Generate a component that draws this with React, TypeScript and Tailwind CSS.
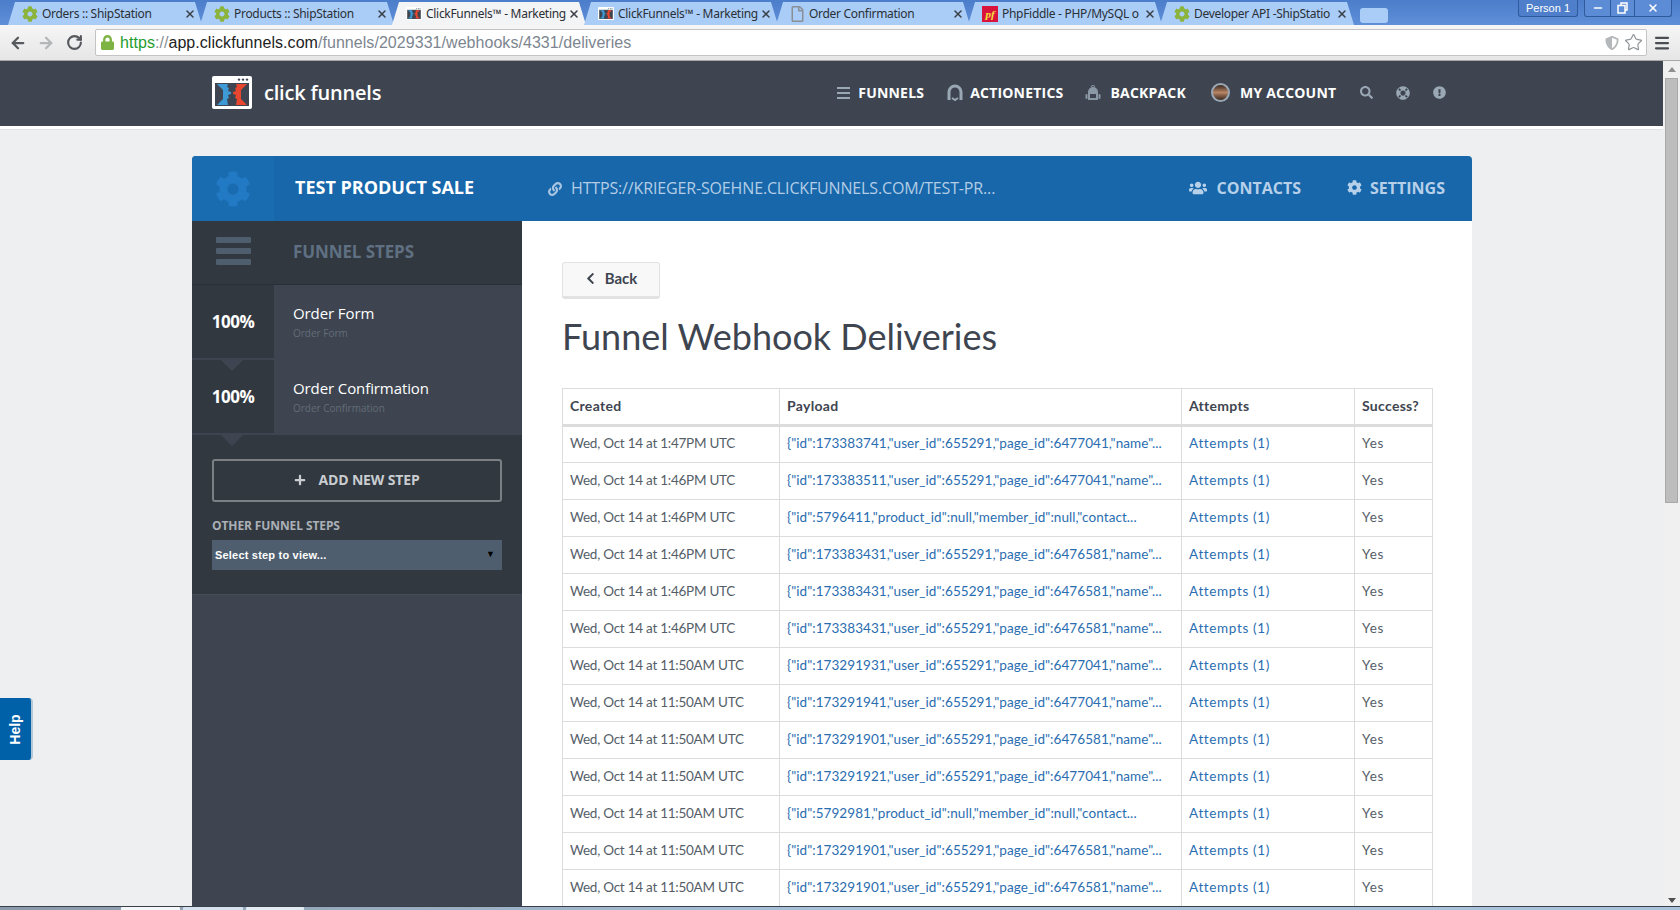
import React from 'react';
import { ArrowLeft, ArrowRight, RotateCw, Star, Menu, Minus, X } from 'lucide-react';
import { FaCog, FaUsers, FaLink, FaChevronLeft, FaSearch, FaPlus, FaLifeRing, FaExclamationCircle, FaShieldAlt, FaLock, FaRegFile } from 'react-icons/fa';

const TABS = [
  { title: 'Orders :: ShipStation', icon: 'gear' },
  { title: 'Products :: ShipStation', icon: 'gear' },
  { title: 'ClickFunnels™ - Marketing', icon: 'cf', active: true },
  { title: 'ClickFunnels™ - Marketing', icon: 'cf' },
  { title: 'Order Confirmation', icon: 'file' },
  { title: 'PhpFiddle - PHP/MySQL o', icon: 'pf' },
  { title: 'Developer API -ShipStatio', icon: 'gear' },
];

const id = (a: string, b: string) => `{"id":${a},"user_id":655291,"page_id":${b},"name"...`;
const contact = (a: string) => `{"id":${a},"product_id":null,"member_id":null,"contact...`;

const ROWS = [
  ['Wed, Oct 14 at 1:47PM UTC', id('173383741', '6477041')],
  ['Wed, Oct 14 at 1:46PM UTC', id('173383511', '6477041')],
  ['Wed, Oct 14 at 1:46PM UTC', contact('5796411')],
  ['Wed, Oct 14 at 1:46PM UTC', id('173383431', '6476581')],
  ['Wed, Oct 14 at 1:46PM UTC', id('173383431', '6476581')],
  ['Wed, Oct 14 at 1:46PM UTC', id('173383431', '6476581')],
  ['Wed, Oct 14 at 11:50AM UTC', id('173291931', '6477041')],
  ['Wed, Oct 14 at 11:50AM UTC', id('173291941', '6477041')],
  ['Wed, Oct 14 at 11:50AM UTC', id('173291901', '6476581')],
  ['Wed, Oct 14 at 11:50AM UTC', id('173291921', '6477041')],
  ['Wed, Oct 14 at 11:50AM UTC', contact('5792981')],
  ['Wed, Oct 14 at 11:50AM UTC', id('173291901', '6476581')],
  ['Wed, Oct 14 at 11:50AM UTC', id('173291901', '6476581')],
];

const CfLogo = ({ size = 40 }: { size?: number }) => (
  <svg width={size} height={size * 0.825} viewBox="0 0 40 33">
    <rect width="40" height="33" rx="2" fill="#fff" />
    <rect x="3" y="7" width="34" height="23" fill="#3e4550" />
    <circle cx="27" cy="3.6" r="1.2" fill="#3e4550" />
    <circle cx="31" cy="3.6" r="1.2" fill="#3e4550" />
    <circle cx="35" cy="3.6" r="1.2" fill="#3e4550" />
    <path d="M5 8h11l-1 3 2 1-1 3 3 1v2l-3 1 1 3-2 1 1 6H5l6-6v-9z" fill="#3d9ad6" />
    <path d="M35 8H24l1 3-2 1 1 3-3 1v2l3 1-1 3 2 1-1 6h11l-6-6v-9z" fill="#e8462e" />
  </svg>
);

const TabIcon = ({ kind }: { kind: string }) => {
  if (kind === 'gear') return <FaCog className="w-4 h-4 shrink-0 text-[#8cb33c]" />;
  if (kind === 'cf') return <CfLogo size={16} />;
  if (kind === 'file') return <FaRegFile className="w-[13px] h-4 mx-px shrink-0 text-[#8a8f96]" />;
  return (
    <span className="w-4 h-4 shrink-0 bg-[#d8143c] text-[#f6e23a] text-[11px] font-bold italic leading-4 text-center [font-family:'Liberation_Serif',serif]">
      pf
    </span>
  );
};

const Tab = ({ title, icon, active }: { title: string; icon: string; active?: boolean }) => (
  <div
    className={`relative -mr-[2px] flex h-[23px] w-[194px] shrink-0 items-center gap-[4px] pl-[14px] pr-[6px] [clip-path:polygon(0_100%,7px_0,calc(100%-7px)_0,100%_100%)] ${
      active ? 'bg-[#f3f4f5]' : 'bg-[#a9cdf6]'
    }`}
  >
    <TabIcon kind={icon} />
    <span className="min-w-0 flex-1 whitespace-nowrap text-[12px] tracking-[-0.3px] text-[#2b2f36] [font-family:'Noto_Sans',sans-serif]">
      {title}
    </span>
    <X className="h-3 w-3 shrink-0 text-[#3a3f47]" strokeWidth={3} />
  </div>
);

const TabStrip = () => (
  <div className="flex h-[25px] items-end bg-gradient-to-b from-[#4c7dca] to-[#5f8fd8] pl-2">
    {TABS.map((t) => (
      <Tab key={t.title + t.icon + (t.active ? 'a' : '')} title={t.title} icon={t.icon} active={t.active} />
    ))}
    <div className="ml-[8px] mb-[2px] h-[15px] w-[28px] rounded-[3px] bg-[#a9cdf6]" />
    <div className="ml-auto mb-auto flex items-start gap-[6px] pr-2">
      <div className="flex h-[17px] w-[60px] items-center justify-center rounded-b-[3px] border border-t-0 border-[#2f5a9c] bg-[#4f7fca] text-[11px] text-white [font-family:'Liberation_Sans',sans-serif]">
        Person 1
      </div>
      <div className="flex h-[17px] w-[88px] rounded-b-[3px] border border-t-0 border-[#2f5a9c] bg-[#5d8cd6] text-white">
        <div className="flex w-[26px] items-center justify-center border-r border-[#2f5a9c]">
          <Minus className="h-3 w-3" strokeWidth={3} />
        </div>
        <div className="flex w-[24px] items-center justify-center border-r border-[#2f5a9c]">
          <svg width="11" height="12" viewBox="0 0 11 12" fill="none" stroke="#fff" strokeWidth="1.5">
            <path d="M4 3V1h6v7H8" />
            <rect x="1" y="3.5" width="7" height="7.5" />
          </svg>
        </div>
        <div className="flex flex-1 items-center justify-center">
          <X className="h-3 w-3" strokeWidth={3} />
        </div>
      </div>
    </div>
  </div>
);

const Toolbar = () => (
  <div className="flex h-[36px] items-center bg-gradient-to-b from-[#f6f6f6] to-[#e6e6e6] border-b border-[#a8a8a8]">
    <ArrowLeft className="ml-[9px] h-[18px] w-[18px] text-[#55585c]" strokeWidth={3} />
    <ArrowRight className="ml-[10px] h-[18px] w-[18px] text-[#b4b6b8]" strokeWidth={3} />
    <RotateCw className="ml-[11px] h-[17px] w-[17px] text-[#55585c]" strokeWidth={3} />
    <div className="ml-[12px] flex h-[27px] w-[1552px] items-center rounded-[2px] border border-[#c4c4c4] bg-white pl-[5px] pr-[3px]">
      <FaLock className="h-[15px] w-[13px] text-[#7cb342]" />
      <div className="ml-[6px] flex-1 text-[16px] tracking-[0.05px] [font-family:'Liberation_Sans',sans-serif]">
        <span className="text-[#1f9d2e]">https</span>
        <span className="text-[#8a8f94]">://</span>
        <span className="text-[#222]">app.clickfunnels.com</span>
        <span className="text-[#7d8690]">/funnels/2029331/webhooks/4331/deliveries</span>
      </div>
      <FaShieldAlt className="h-[16px] w-[14px] text-[#b4b8ba]" />
      <Star className="ml-[5px] h-[19px] w-[19px] text-[#8f9498]" strokeWidth={1.5} />
    </div>
    <Menu className="ml-[6px] h-[18px] w-[18px] text-[#4a4d52]" strokeWidth={3} />
  </div>
);

const ActioneticsIcon = () => (
  <svg width="16" height="17" viewBox="0 0 16 17" fill="none" stroke="#9aa8b6" strokeWidth="3">
    <path d="M2 16V8a6 6 0 0 1 12 0v8" />
    <path d="M5 14l3 2 3-2" strokeWidth="2" />
  </svg>
);

const BackpackIcon = () => (
  <svg width="16" height="17" viewBox="0 0 16 17" fill="#8a97a4">
    <path d="M6 3a2 2 0 0 1 4 0h-1a1 1 0 0 0-2 0z" />
    <path d="M3 8a5 5 0 0 1 10 0v8H3zM5 10v4h6v-4z" />
    <rect x="0.5" y="10" width="2" height="5" rx="1" />
    <rect x="13.5" y="10" width="2" height="5" rx="1" />
  </svg>
);

const NavItem = ({ icon, label, gap }: { icon: React.ReactNode; label: string; gap: string }) => (
  <div className={`flex items-center ${gap}`}>
    {icon}
    <span className="text-[14px] font-bold text-white [font-family:'Open_Sans',sans-serif] tracking-[0.2px]">{label}</span>
  </div>
);

const AppHeader = () => (
  <div className="h-[65px] bg-[#3e4550] pl-[212px] pb-[2px] flex items-center">
    <CfLogo />
    <span className="ml-3 text-[20px] font-semibold text-white [font-family:'Open_Sans',sans-serif] tracking-[-0.2px]">click funnels</span>
    <div className="ml-[456px] flex items-center">
      <NavItem
        gap="gap-[8px]"
        label="FUNNELS"
        icon={
          <div className="flex w-[13px] flex-col gap-[3px]">
            <div className="h-[2px] bg-[#9aa8b6]" />
            <div className="h-[2px] bg-[#9aa8b6]" />
            <div className="h-[2px] bg-[#9aa8b6]" />
          </div>
        }
      />
      <div className="ml-[23px]">
        <NavItem gap="gap-[7px]" label="ACTIONETICS" icon={<ActioneticsIcon />} />
      </div>
      <div className="ml-[22px]">
        <NavItem gap="gap-[9px]" label="BACKPACK" icon={<BackpackIcon />} />
      </div>
      <div className="ml-[25px]">
        <NavItem
          gap="gap-[10px]"
          label="MY ACCOUNT"
          icon={<div className="h-[19px] w-[19px] rounded-full border-2 border-[#9aa8b6] bg-gradient-to-b from-[#3a2a20] via-[#b98565] to-[#3a2a20]" />}
        />
      </div>
      <FaSearch className="ml-[24px] h-[13px] w-[13px] text-[#9aa8b6]" />
      <FaLifeRing className="ml-[23px] h-[14px] w-[14px] text-[#9aa8b6]" />
      <FaExclamationCircle className="ml-[23px] h-[13px] w-[13px] text-[#9aa8b6]" />
    </div>
  </div>
);

const CardHeader = () => (
  <div className="flex h-[65px] items-center rounded-t-[4px] bg-[#1767aa] [font-family:'Open_Sans',sans-serif]">
    <div className="flex h-full w-[82px] shrink-0 items-center justify-center rounded-tl-[4px] bg-[#1a6cb1]">
      <FaCog className="h-[36px] w-[36px] text-[#2279c4]" />
    </div>
    <div className="ml-[21px] w-[253px] shrink-0 pb-[2px] text-[18px] font-bold text-white">TEST PRODUCT SALE</div>
    <FaLink className="h-[14px] w-[14px] text-[#a8c5e2]" />
    <div className="ml-[9px] pb-[2px] text-[16px] text-[#b4cde6] tracking-[-0.15px]">HTTPS://KRIEGER-SOEHNE.CLICKFUNNELS.COM/TEST-PR...</div>
    <div className="ml-auto flex items-center pr-[27px] pb-[2px] text-[16px] font-bold text-[#b7d0e9]">
      <FaUsers className="h-[18px] w-[18px]" />
      <span className="ml-[9px]">CONTACTS</span>
      <FaCog className="ml-[46px] h-[15px] w-[15px]" />
      <span className="ml-[8px]">SETTINGS</span>
    </div>
  </div>
);

const Chevron = () => (
  <div className="absolute left-[27px] top-full z-10 h-0 w-0 border-x-[13px] border-t-[13px] border-x-transparent border-t-[#3e4550]" />
);

const StepRow = ({ name }: { name: string }) => (
  <div className="flex h-[75px] bg-[#3e4550]">
    <div className="relative mb-[2px] flex w-[82px] shrink-0 items-center justify-center bg-[#32383f]">
      <span className="text-[17px] font-bold text-white tracking-[-0.5px]">100%</span>
      <Chevron />
    </div>
    <div className="ml-[19px] pt-[16px]">
      <div className="text-[15px] leading-[24px] text-white tracking-[-0.1px]">{name}</div>
      <div className="mt-[1px] text-[10px] leading-[14px] text-[#636c77]">{name}</div>
    </div>
  </div>
);

const Sidebar = () => (
  <div className="w-[330px] shrink-0 bg-[#3e4550] [font-family:'Open_Sans',sans-serif]">
    <div className="flex h-[64px] items-center border-b border-[#2b3036] bg-[#32383f]">
      <div className="flex h-full w-[82px] shrink-0 flex-col items-center justify-center gap-[5px] pb-[4px]">
        <div className="h-[6px] w-[35px] rounded-[1px] bg-[#4f5e6e]" />
        <div className="h-[6px] w-[35px] rounded-[1px] bg-[#4f5e6e]" />
        <div className="h-[6px] w-[35px] rounded-[1px] bg-[#4f5e6e]" />
      </div>
      <div className="ml-[19px] pb-[2px] text-[17px] font-bold text-[#5f7083] tracking-[-0.1px]">FUNNEL STEPS</div>
    </div>
    <StepRow name="Order Form" />
    <StepRow name="Order Confirmation" />
    <div className="h-[160px] border-b border-[#454d58] bg-[#32383f] px-5 pt-[24px]">
      <div className="flex h-[43px] items-center justify-center gap-3 rounded-[3px] border-2 border-[#7c8085] pb-[2px] text-[14px] font-bold text-[#c9cdd1] tracking-[-0.15px]">
        <FaPlus className="h-[12px] w-[12px]" />
        ADD NEW STEP
      </div>
      <div className="mt-[16px] text-[12px] leading-[16px] font-bold text-[#aab0b7] tracking-[-0.1px]">OTHER FUNNEL STEPS</div>
      <div className="mt-[6px] flex h-[30px] items-center justify-between bg-[#4f5e6e] pl-[3px] pr-[7px] text-[11px] font-bold text-white tracking-[0.2px] [font-family:'Liberation_Sans',sans-serif]">
        Select step to view...
        <span className="text-[9px] text-black">▼</span>
      </div>
    </div>
  </div>
);

const DeliveriesTable = () => (
  <table className="w-[870px] table-fixed border-collapse text-[13.5px] text-[#555e68]">
    <colgroup>
      <col className="w-[217px]" />
      <col className="w-[402px]" />
      <col className="w-[173px]" />
      <col className="w-[78px]" />
    </colgroup>
    <thead>
      <tr className="h-[37px] border-b-[3px] border-[#dcdcdc]">
        {['Created', 'Payload', 'Attempts', 'Success?'].map((h) => (
          <th key={h} className="border border-b-[3px] border-[#dcdcdc] pl-[7px] pr-1 pb-[2px] text-left text-[14px] font-bold text-[#3e4550] tracking-[0.3px]">
            {h}
          </th>
        ))}
      </tr>
    </thead>
    <tbody>
      {ROWS.map(([created, payload], i) => (
        <tr key={i} className="h-[37px]">
          <td className="border border-[#dcdcdc] pl-[7px] pr-1 pb-[2px] whitespace-nowrap tracking-[-0.25px]">{created}</td>
          <td className="border border-[#dcdcdc] pl-[7px] pr-1 pb-[2px] whitespace-nowrap text-[#2a6db0] tracking-[0.07px]">{payload}</td>
          <td className="border border-[#dcdcdc] pl-[7px] pr-1 pb-[2px] text-[#2a6db0] tracking-[0.65px]">Attempts (1)</td>
          <td className="border border-[#dcdcdc] pl-[7px] pr-1 pb-[2px] tracking-[0.7px]">Yes</td>
        </tr>
      ))}
    </tbody>
  </table>
);

const Main = () => (
  <div className="flex-1 bg-white pl-10 pt-[41px] [font-family:Lato,sans-serif]">
    <button className="flex h-[37px] w-[98px] items-center justify-center gap-[9px] rounded-[3px] border border-b-[3px] border-[#e2e2e2] bg-[#f8f8f8] pb-[2px] text-[15px] font-bold text-[#3e4550]">
      <FaChevronLeft className="h-[13px] w-[11px]" />
      Back
    </button>
    <h1 className="mt-[14px] text-[36px] leading-[46px] font-normal text-[#3e4550]">Funnel Webhook Deliveries</h1>
    <div className="mt-[29px]">
      <DeliveriesTable />
    </div>
  </div>
);

const Scrollbar = () => (
  <div className="flex w-[17px] shrink-0 flex-col items-center bg-[#f0f0f0]">
    <div className="mt-[6px] h-0 w-0 border-x-[4px] border-b-[5px] border-x-transparent border-b-[#8f8f8f]" />
    <div className="mt-[6px] h-[425px] w-[13px] border border-[#a8a8a8] bg-[#bdbdbd]" />
    <div className="mt-auto mb-[3px] h-0 w-0 border-x-[4px] border-t-[5px] border-x-transparent border-t-[#505050]" />
  </div>
);

const Taskbar = () => (
  <div className="flex h-[4px] border-t border-[#3a4048] bg-gradient-to-r from-[#8b9aaa] via-[#a9c3dc] to-[#a9c3dc] pl-[121px]">
    <div className="h-full w-[59px] rounded-t-[1px] bg-[#f4f7fa]" />
    <div className="ml-[3px] h-full w-[60px] rounded-t-[1px] bg-[#d5e1ee]" />
    <div className="ml-[3px] h-full w-[58px] rounded-t-[1px] bg-[#e2eaf3]" />
  </div>
);

export default function App() {
  return (
    <div className="flex h-screen flex-col overflow-hidden bg-[#eeeff1]">
      <TabStrip />
      <Toolbar />
      <div className="relative flex min-h-0 flex-1">
        <div className="min-w-0 flex-1 overflow-hidden">
          <AppHeader />
          <div className="h-[4px] border-b border-[#e2e2e2] bg-white" />
          <div className="ml-[192px] mt-[26px] w-[1280px]">
            <CardHeader />
            <div className="flex h-[700px]">
              <Sidebar />
              <Main />
            </div>
          </div>
        </div>
        <Scrollbar />
        <div className="absolute left-0 top-[637px] flex h-[62px] w-[33px] items-center justify-center rounded-r-[4px] border-r-2 border-[#b5c8d8] bg-[#0060a8]">
          <span className="-rotate-90 text-[14px] font-bold text-white [font-family:'Liberation_Sans',sans-serif]">Help</span>
        </div>
      </div>
      <Taskbar />
    </div>
  );
}
